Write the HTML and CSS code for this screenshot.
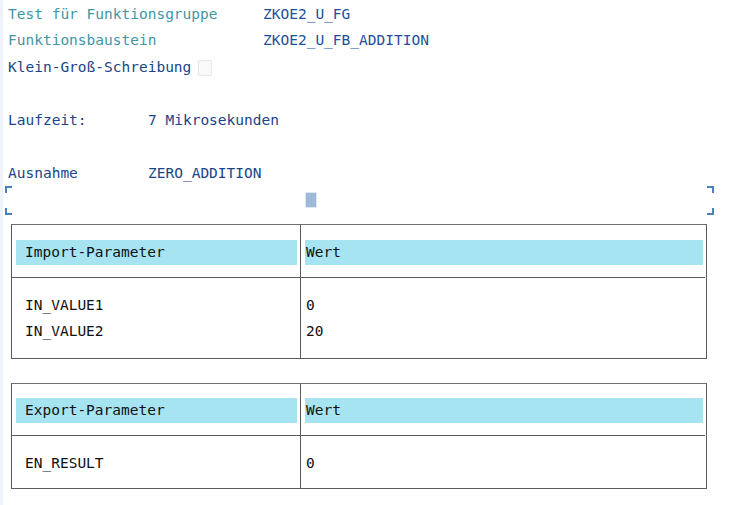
FILE: index.html
```html
<!DOCTYPE html>
<html lang="de">
<head>
<meta charset="utf-8">
<title>Funktionsbaustein Test</title>
<link rel="stylesheet" href="styles.css">
</head>
<body>
<div class="page">
  <div class="info">
    <div class="line label-teal">Test für Funktionsgruppe</div>
    <div class="line value">ZKOE2_U_FG</div>
    <div class="line label-teal">Funktionsbaustein</div>
    <div class="line value">ZKOE2_U_FB_ADDITION</div>
  </div>
  <div class="line case">
    <span class="label-blue">Klein-Groß-Schreibung</span>
    <span class="checkbox"></span>
  </div>
  <div class="line"></div>
  <div class="run">
    <div class="line label-blue">Laufzeit:</div>
    <div class="line label-blue">7 Mikrosekunden</div>
  </div>
  <div class="line"></div>
  <div class="run">
    <div class="line label-blue">Ausnahme</div>
    <div class="line label-blue">ZERO_ADDITION</div>
  </div>

  <div class="frame">
    <span class="corner tl"></span>
    <span class="corner tr"></span>
    <span class="corner bl"></span>
    <span class="corner br"></span>
    <span class="marker"></span>
  </div>

  <div class="ptable import">
    <div class="hcell first"><div class="band">Import-Parameter</div></div>
    <div class="hcell second"><div class="band">Wert</div></div>
    <div class="bcell first">
      <div class="row">IN_VALUE1</div>
      <div class="row">IN_VALUE2</div>
    </div>
    <div class="bcell second">
      <div class="row">0</div>
      <div class="row">20</div>
    </div>
  </div>

  <div class="ptable export">
    <div class="hcell first"><div class="band">Export-Parameter</div></div>
    <div class="hcell second"><div class="band">Wert</div></div>
    <div class="bcell first">
      <div class="row">EN_RESULT</div>
    </div>
    <div class="bcell second">
      <div class="row">0</div>
    </div>
  </div>
</div>
</body>
</html>
```

FILE: styles.css
```css
html, body {
  margin: 0;
  padding: 0;
  background: #ffffff;
}

body {
  font-family: "DejaVu Sans Mono", "Liberation Mono", monospace;
  font-size: 14.5px;
}

.page {
  border-left: 3px solid #eef3f9;
  padding: 0.5px 0 0 5px;
  min-height: 505px;
  box-sizing: border-box;
}

.line {
  height: 26.5px;
  line-height: 26.5px;
  white-space: nowrap;
}

.info {
  display: grid;
  grid-template-columns: 255px auto;
}

.run {
  display: grid;
  grid-template-columns: 140px auto;
}

.label-teal {
  color: #3f96a6;
}

.value {
  color: #1d4f9c;
}

.label-blue {
  color: #1c4488;
}

.case {
  display: flex;
  align-items: center;
  gap: 7px;
}

.checkbox {
  display: inline-block;
  width: 12px;
  height: 14px;
  border: 1px solid #e6e8ea;
  background: #f8f9fa;
  border-radius: 1px;
  margin-top: 2px;
}

.frame {
  position: relative;
  margin: 0 0 0 -3px;
  width: 709px;
  height: 29px;
  box-sizing: border-box;
  padding: 7px 0 0 301px;
}

.marker {
  display: block;
  width: 10px;
  height: 14px;
  background: #9fbad9;
  outline: 1px solid #dfe8f2;
}

.corner {
  position: absolute;
  width: 5px;
  height: 5px;
  border-color: #4b80b8;
  border-style: solid;
  border-width: 0;
}

.corner.tl { left: 0; top: 0; border-top-width: 2px; border-left-width: 2px; }
.corner.tr { right: 0; top: 0; border-top-width: 2px; border-right-width: 2px; }
.corner.bl { left: 0; bottom: 0; border-bottom-width: 2px; border-left-width: 2px; }
.corner.br { right: 0; bottom: 0; border-bottom-width: 2px; border-right-width: 2px; }

.ptable {
  display: grid;
  grid-template-columns: 289px 404px;
  width: 696px;
  margin-left: 3px;
  border: 1px solid #5a5a5a;
  border-top-color: #6f6f6f;
  box-sizing: border-box;
  color: #111111;
}

.ptable.import {
  margin-top: 9px;
}

.ptable.export {
  margin-top: 24px;
}

.hcell {
  border-bottom: 1px solid #5a5a5a;
}

.hcell.first, .bcell.first {
  border-right: 1px solid #5a5a5a;
}

.import .hcell {
  padding: 15px 0 12px 4px;
}

.export .hcell {
  padding: 14px 0 12px 4px;
}

.hcell.first {
  padding-right: 3px;
}

.hcell.second {
  padding-right: 2px;
}

.band {
  background: #a6e4f2;
  height: 25px;
  line-height: 25px;
  white-space: nowrap;
}

.hcell.first .band {
  padding-left: 9px;
}

.hcell.second .band {
  padding-left: 1px;
}

.import .bcell {
  padding: 14px 0 14px 0;
}

.export .bcell {
  padding: 14px 0 12px 0;
}

.bcell.first .row {
  padding-left: 13px;
}

.bcell.second .row {
  padding-left: 5px;
}

.row {
  height: 26px;
  line-height: 25px;
  padding-top: 1px;
  box-sizing: border-box;
  white-space: nowrap;
}
```
